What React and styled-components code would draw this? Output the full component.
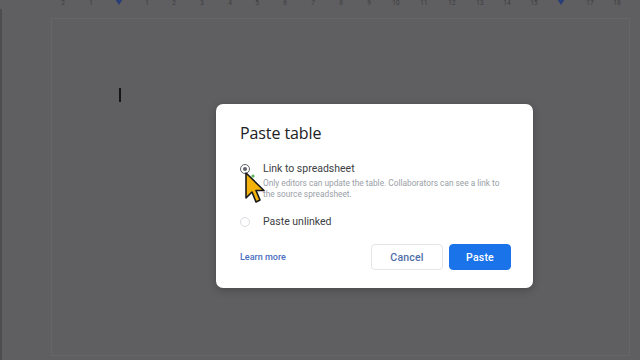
import React from "react";
import styled, { createGlobalStyle } from "styled-components";

const GlobalStyle = createGlobalStyle`
  html, body {
    margin: 0;
    padding: 0;
    width: 640px;
    height: 360px;
    overflow: hidden;
    background: #5f5e60;
    font-family: Roboto, "Liberation Sans", Arial, sans-serif;
  }
`;

const Screen = styled.div`
  position: relative;
  width: 640px;
  height: 360px;
  display: flex;
  flex-direction: column;
  background: #5f5e60;
`;

const Ruler = styled.div`
  height: 9px;
  position: relative;
  flex-shrink: 0;
`;

const Tick = styled.span`
  position: absolute;
  top: 0;
  font-size: 6.5px;
  line-height: 7px;
  color: #3e3e40;
  transform: translateX(-50%);
`;

const Marker = styled.span`
  position: absolute;
  top: -1px;
  width: 0;
  height: 0;
  border-left: 4px solid transparent;
  border-right: 4px solid transparent;
  border-top: 6px solid #2a3f78;
  transform: translateX(-50%);
`;

const Workspace = styled.div`
  flex: 1;
  display: flex;
  padding: 9px 10px 4px 49px;
  border-left: 2px solid #4d4c4e;
`;

const Page = styled.div`
  flex: 1;
  border: 1px solid #666567;
  padding: 69px 0 0 67px;
`;

const Caret = styled.div`
  width: 2px;
  height: 14px;
  background: #151515;
`;

const Backdrop = styled.div`
  position: absolute;
  inset: 0;
  display: flex;
  align-items: flex-start;
  padding: 104px 0 0 216px;
`;

const Dialog = styled.div`
  position: relative;
  width: 317px;
  height: 184px;
  box-sizing: border-box;
  background: #ffffff;
  border-radius: 7px;
  padding: 18px 22px 0 24px;
  display: flex;
  flex-direction: column;
  box-shadow: 0 2px 8px rgba(0, 0, 0, 0.25);
`;

const Title = styled.h1`
  margin: 0;
  font-family: "Open Sans", Roboto, sans-serif;
  font-weight: 400;
  font-size: 16px;
  line-height: 22px;
  color: #202124;
  letter-spacing: -0.1px;
`;

const Options = styled.div`
  display: flex;
  flex-direction: column;
  gap: 15px;
  margin-top: 18px;
`;

const Option = styled.div`
  display: flex;
  gap: 13px;
  align-items: flex-start;
`;

const Radio = styled.span`
  width: 8px;
  height: 8px;
  flex-shrink: 0;
  margin-top: 2px;
  border-radius: 50%;
  border: 1.5px solid ${(p) => (p.checked ? "#5f6368" : "#dadce0")};
  display: flex;
  align-items: center;
  justify-content: center;
  &::after {
    content: "";
    width: 4px;
    height: 4px;
    border-radius: 50%;
    background: ${(p) => (p.checked ? "#5f6368" : "transparent")};
  }
`;

const OptionText = styled.div`
  display: flex;
  flex-direction: column;
`;

const Label = styled.div`
  font-size: 10.5px;
  line-height: 14px;
  color: #3c4043;
`;

const Hint = styled.div`
  font-size: 8.3px;
  line-height: 11px;
  color: #9aa0a6;
  margin-top: 2px;
  width: 240px;
`;

const Footer = styled.div`
  display: flex;
  align-items: center;
  margin-top: 15px;
  gap: 6px;
`;

const LearnMore = styled.a`
  font-size: 9px;
  font-weight: 500;
  color: #4b6fbf;
  margin-right: auto;
  text-decoration: none;
`;

const Button = styled.button`
  height: 26px;
  box-sizing: border-box;
  border-radius: 4px;
  font-family: Roboto, sans-serif;
  font-weight: 500;
  font-size: 10.5px;
  letter-spacing: 0.2px;
  padding: 0;
  width: ${(p) => p.w}px;
  border: 1px solid ${(p) => (p.primary ? "#1a73e8" : "#e3e5e8")};
  background: ${(p) => (p.primary ? "#1a73e8" : "#ffffff")};
  color: ${(p) => (p.primary ? "#ffffff" : "#4e6ea8")};
`;

const Pointer = styled.svg`
  position: absolute;
  left: 244px;
  top: 171px;
`;

const ticks = [
  [63, "2"], [91, "1"], [147, "1"], [174, "2"], [202, "3"], [230, "4"],
  [257, "5"], [285, "6"], [313, "7"], [341, "8"], [369, "9"], [396, "10"],
  [424, "11"], [452, "12"], [480, "13"], [507, "14"], [534, "15"],
  [590, "17"], [617, "18"],
];

export default function App() {
  return (
    <Screen>
      <GlobalStyle />
      <Ruler>
        {ticks.map(([x, t]) => (
          <Tick key={x} style={{ left: x }}>{t}</Tick>
        ))}
        <Marker style={{ left: 119 }} />
        <Marker style={{ left: 561 }} />
      </Ruler>
      <Workspace>
        <Page>
          <Caret />
        </Page>
      </Workspace>
      <Backdrop>
        <Dialog>
          <Title>Paste table</Title>
          <Options>
            <Option>
              <Radio checked />
              <OptionText>
                <Label>Link to spreadsheet</Label>
                <Hint>
                  Only editors can update the table. Collaborators can see a link to
                  the source spreadsheet.
                </Hint>
              </OptionText>
            </Option>
            <Option>
              <Radio />
              <OptionText>
                <Label>Paste unlinked</Label>
              </OptionText>
            </Option>
          </Options>
          <Footer>
            <LearnMore href="#">Learn more</LearnMore>
            <Button w={72}>Cancel</Button>
            <Button primary w={62}>Paste</Button>
          </Footer>
        </Dialog>
      </Backdrop>
      <Pointer width="24" height="34" viewBox="0 0 24 34">
        <circle cx="9" cy="5" r="1.6" fill="#5bb55b" />
        <path
          d="M2 2 L2 27 L8 21 L12 31 L16 29 L12 19.5 L20 19.5 Z"
          fill="#f3b30c"
          stroke="#1a1a1a"
          strokeWidth="1.6"
          strokeLinejoin="round"
        />
      </Pointer>
    </Screen>
  );
}
